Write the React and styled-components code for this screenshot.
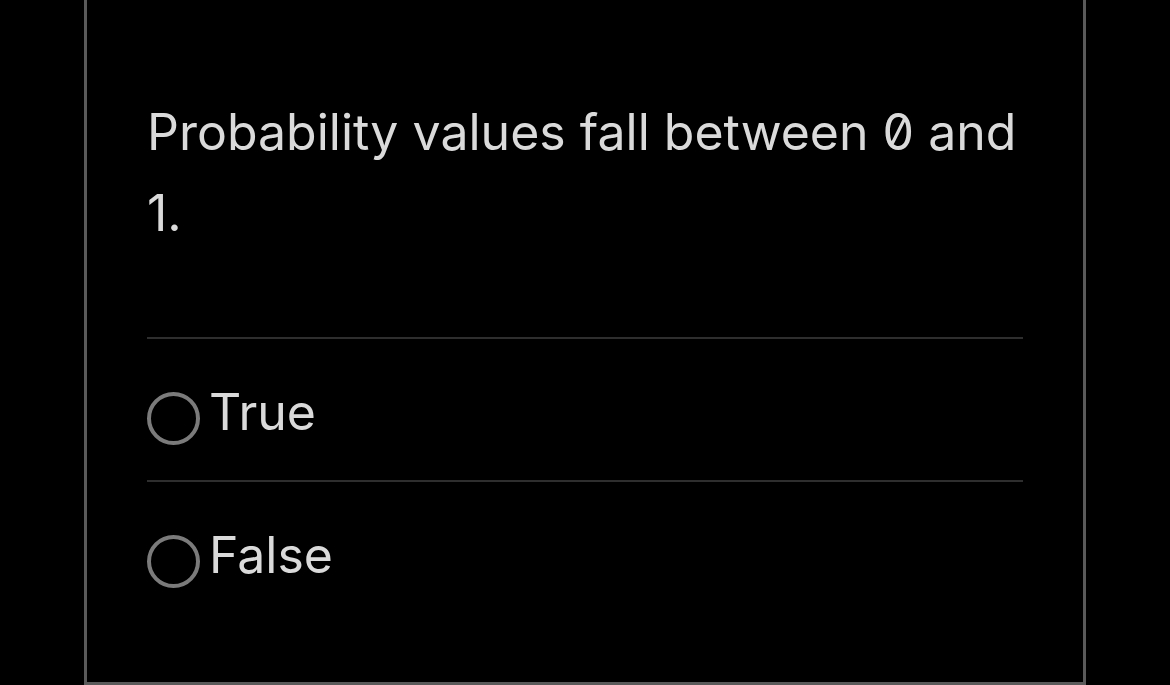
import React from "react";
import styled, { createGlobalStyle } from "styled-components";

const Global = createGlobalStyle`
  html, body { margin: 0; padding: 0; background: #000; }
  body { font-family: Inter, "Noto Sans", sans-serif; }
`;

const Page = styled.div`
  background: #000;
  height: 685px;
  overflow: hidden;
  padding-left: 84px;
`;

const Card = styled.section`
  width: 1002px;
  box-sizing: border-box;
  border: 3px solid #5a5a5a;
  border-top: none;
  padding: 92px 60px 59px;
  background: #000;
`;

const Question = styled.p`
  margin: 0 0 83px;
  font-size: 50px;
  line-height: 81px;
  color: #dadada;
  font-feature-settings: "zero" 1;
`;

const Options = styled.div`
  display: flex;
  flex-direction: column;
`;

const Option = styled.label`
  display: flex;
  align-items: flex-start;
  gap: 9px;
  border-top: 2px solid #2e2e2e;
  padding: 53px 0 35px;
  cursor: pointer;
`;

const Radio = styled.span`
  width: 53px;
  height: 53px;
  box-sizing: border-box;
  border: 4px solid #7b7b7b;
  border-radius: 50%;
  flex: none;
`;

const OptionText = styled.span`
  font-size: 50px;
  line-height: 40px;
  color: #dadada;
`;

export default function App() {
  return (
    <Page>
      <Global />
      <Card>
        <Question>Probability values fall between 0 and 1.</Question>
        <Options>
          {["True", "False"].map((o) => (
            <Option key={o}>
              <Radio />
              <OptionText>{o}</OptionText>
            </Option>
          ))}
        </Options>
      </Card>
    </Page>
  );
}
